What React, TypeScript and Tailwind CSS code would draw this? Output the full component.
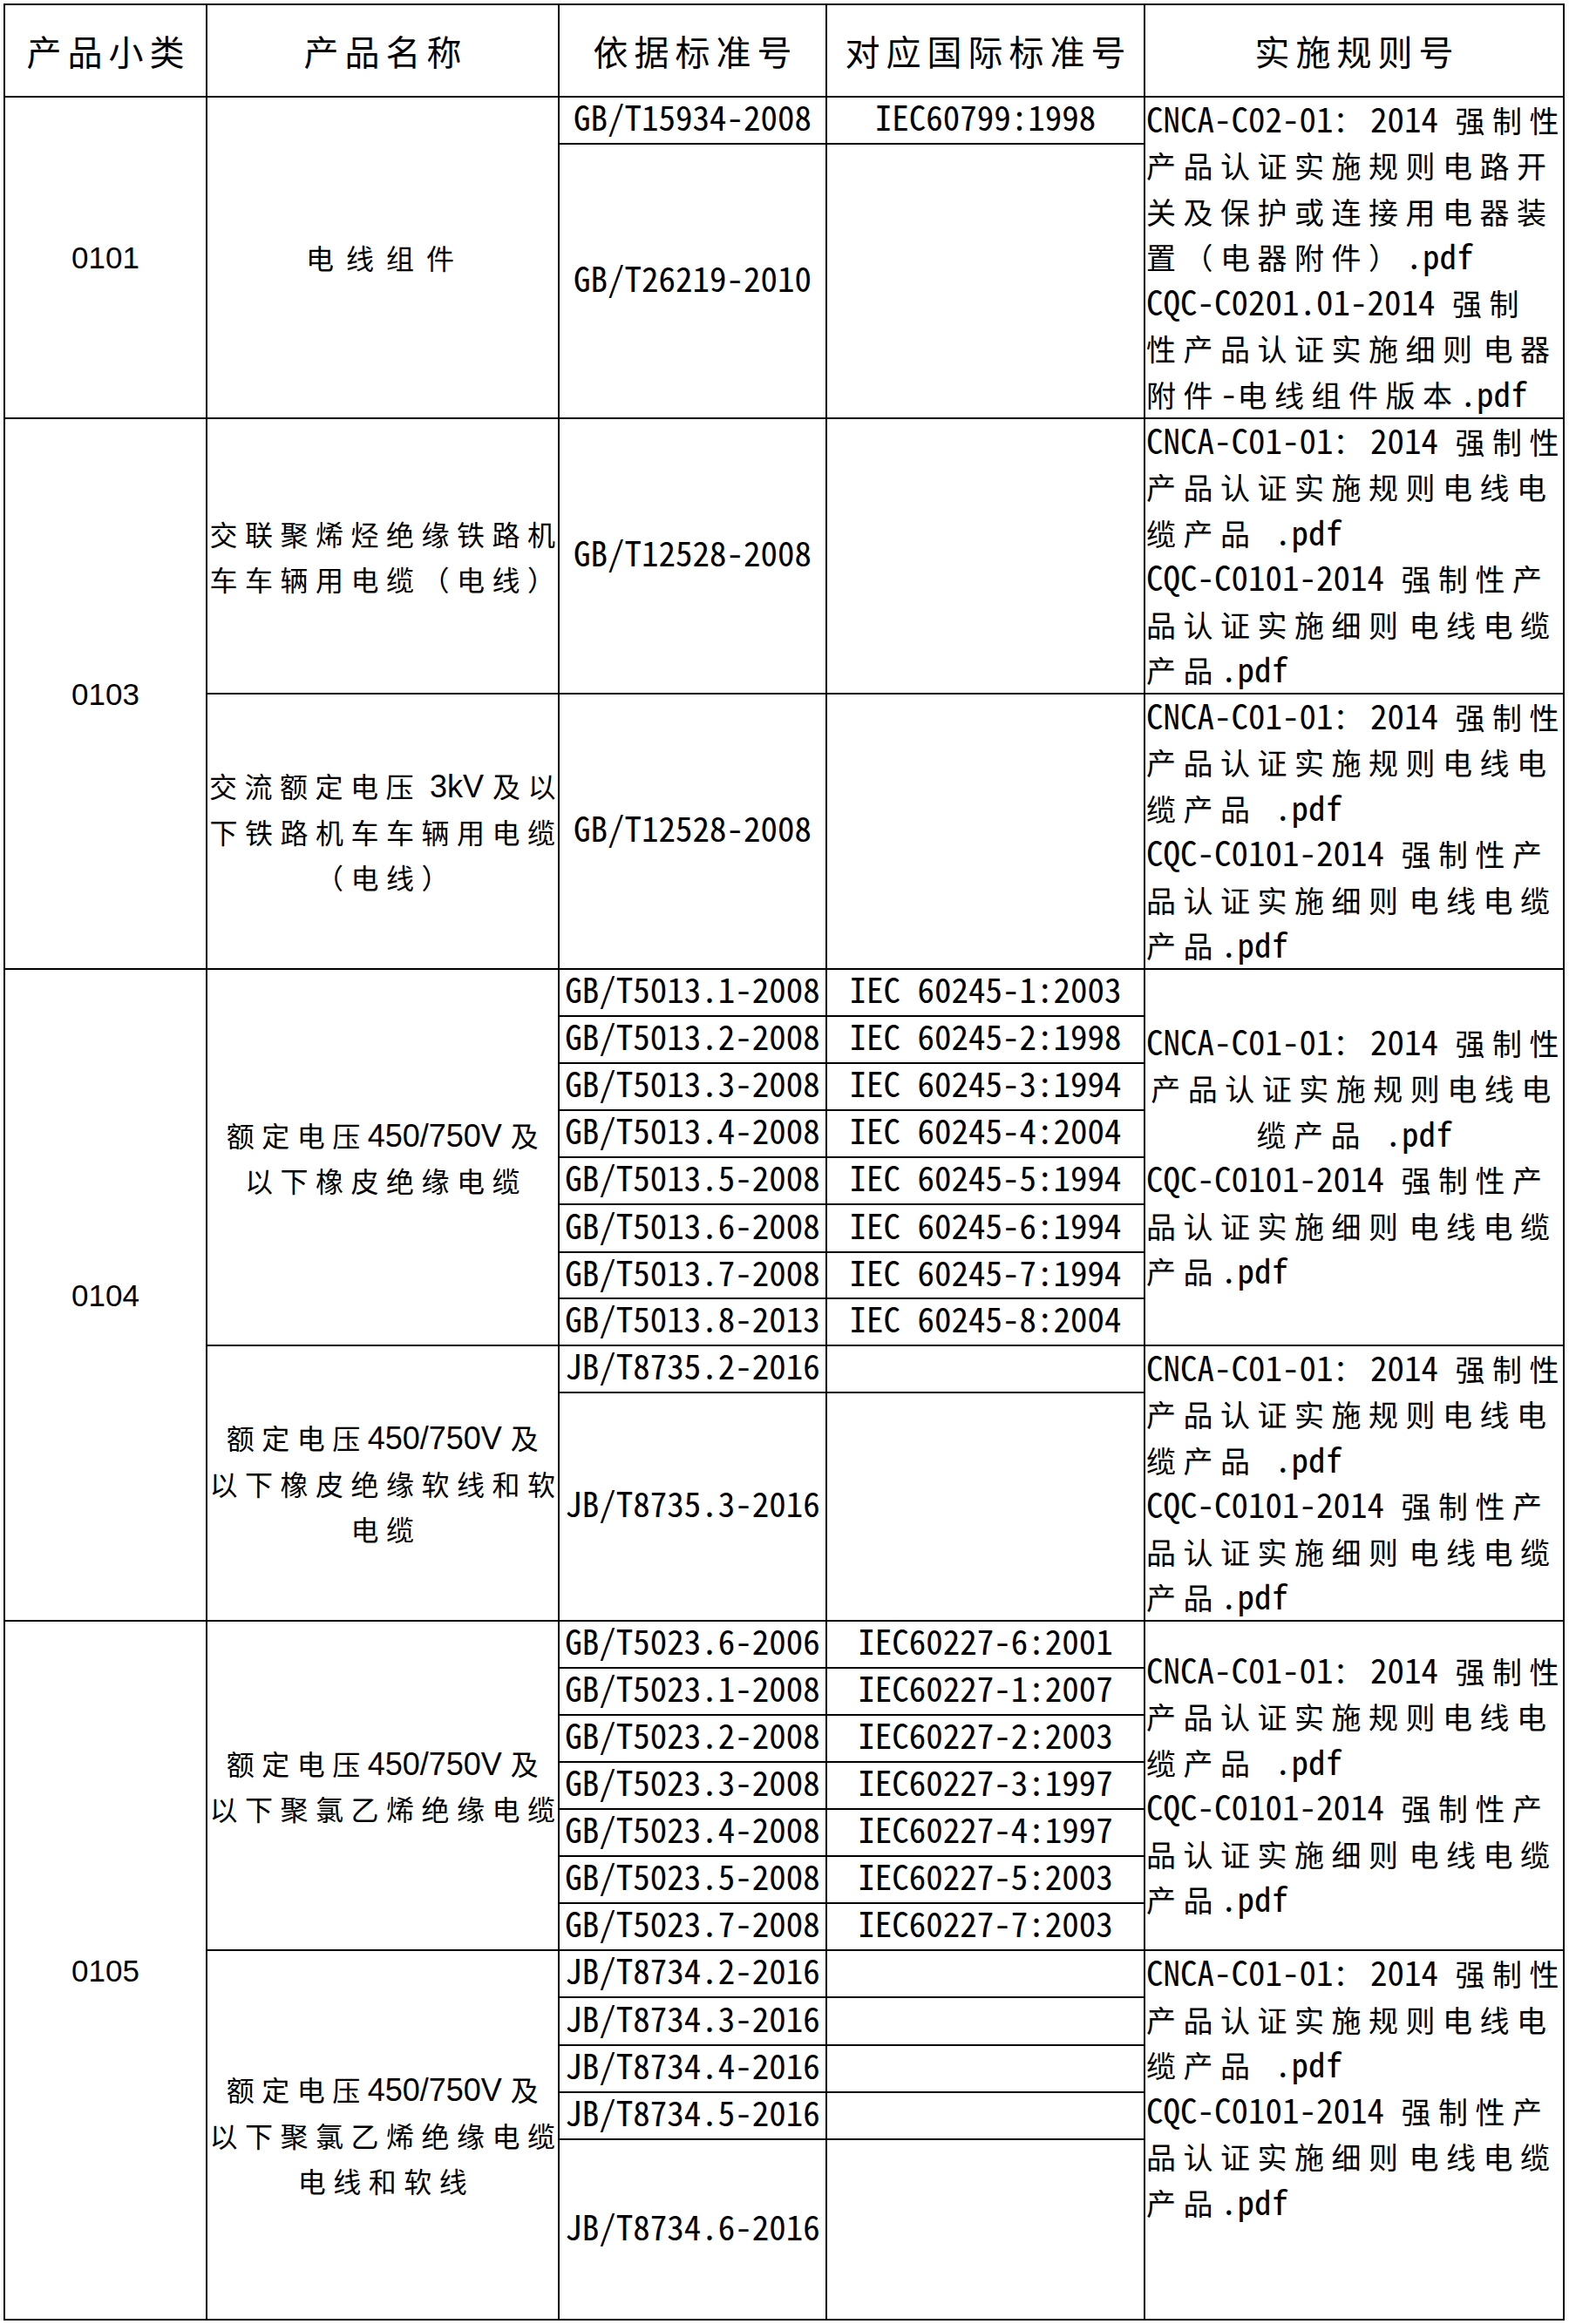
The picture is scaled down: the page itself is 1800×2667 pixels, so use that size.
import clsx from "clsx";
import type { ReactNode } from "react";

const CJK = /([\u3000-\u303f\u4e00-\u9fff\uff00-\uffef]+)/;

const MONO = "text-[39px] font-['Noto_Sans_Mono_CJK_SC','DejaVu_Sans_Mono',monospace]";
const SANS = "text-[36px] font-['Liberation_Sans',Arial,sans-serif]";
const CJK_RULE = "text-[34px] tracking-[8.5px]";
const CJK_NAME = "text-[32px] tracking-[8.5px]";

function Mixed({ text, latin = MONO, cjk = CJK_RULE }: { text: string; latin?: string; cjk?: string }) {
  const parts = text.split(CJK).filter(Boolean);
  return (
    <>
      {parts.map((p, i) => {
        if (CJK.test(p)) {
          return (
            <span key={i} className={clsx("leading-none font-['Noto_Sans_CJK_SC',sans-serif]", cjk)}>
              {p}
            </span>
          );
        }
        // a lone space between two Chinese runs is narrow in the source
        if (p.trim() === "" && i > 0 && i < parts.length - 1) {
          return (
            <span key={i} className="leading-none text-[18px]">
              {p}
            </span>
          );
        }
        return (
          <span key={i} className={clsx("leading-none", latin)}>
            {p}
          </span>
        );
      })}
    </>
  );
}

type CellProps = {
  children?: ReactNode;
  className?: string;
};

function Cell({ children, className }: CellProps) {
  return (
    <div className={clsx("border-r-2 border-b-2 border-black flex flex-col justify-center min-w-0", className)}>
      {children}
    </div>
  );
}

type LinesProps = {
  lines: string[];
  latin?: string;
  cjk?: string;
  align?: "left" | "center";
};

function Lines({ lines, latin, cjk, align = "left" }: LinesProps) {
  return (
    <>
      {lines.map((l, i) => (
        <div
          key={i}
          className={clsx(
            "h-[52.5px] leading-[52.5px] text-[32px] whitespace-pre font-['Noto_Sans_CJK_SC',sans-serif]",
            align === "center" ? "text-center" : "text-left"
          )}
        >
          <Mixed text={l} latin={latin} cjk={cjk} />
        </div>
      ))}
    </>
  );
}

function Head({ text }: { text: string }) {
  return (
    <Cell className="items-center">
      <span className="text-[40px] tracking-[7px] pl-[7px] leading-none font-['Noto_Sans_CJK_SC',sans-serif]">
        {text}
      </span>
    </Cell>
  );
}

function Code({ text, span }: { text: string; span: string }) {
  return (
    <Cell className={clsx("items-center", span)}>
      <span className="text-[35px] leading-none font-['Liberation_Sans',Arial,sans-serif]">{text}</span>
    </Cell>
  );
}

function Name({ lines, span, cjk = CJK_NAME }: { lines: string[]; span: string; cjk?: string }) {
  return (
    <Cell className={clsx("items-center", span)}>
      <div className="pl-[8px]">
        <Lines lines={lines} latin={SANS} cjk={cjk} align="center" />
      </div>
    </Cell>
  );
}

function Std({ text }: { text?: string }) {
  return (
    <Cell className="items-center">
      {text && (
        <div className="h-[52px] leading-[52px] text-[32px] whitespace-pre">
          <Mixed text={text} />
        </div>
      )}
    </Cell>
  );
}

const CNCA_C01 = ["CNCA-C01-01：2014 强制性", "产品认证实施规则电线电", "缆产品 .pdf"];
const CQC_C0101 = ["CQC-C0101-2014 强制性产", "品认证实施细则 电线电缆", "产品.pdf"];

function Rule({ span, top, centerFirst }: { span?: string; top?: boolean; centerFirst?: boolean }) {
  return (
    <Cell className={clsx("pl-[1px]", span, top ? "justify-start" : "justify-center")}>
      <Lines lines={CNCA_C01} align={centerFirst ? "center" : "left"} />
      <Lines lines={CQC_C0101} />
    </Cell>
  );
}

export default function App() {
  return (
    <div className="bg-white min-h-[2667px] p-[4px] text-black">
      <div className="grid w-[1791px] border-l-2 border-t-2 border-black grid-cols-[232px_404px_307px_365px_481px] grid-rows-[106px_54px_315px_316px_316px_54px_54px_54px_54px_54px_55px_53px_54px_54px_262px_54px_54px_54px_54px_54px_54px_54px_54px_55px_54px_54px_207px]">
        <Head text="产品小类" />
        <Head text="产品名称" />
        <Head text="依据标准号" />
        <Head text="对应国际标准号" />
        <Head text="实施规则号" />

        {/* 0101 */}
        <Code text="0101" span="row-span-2" />
        <Name lines={["电线组件"]} span="row-span-2" cjk="text-[32px] tracking-[14px]" />
        <Std text="GB/T15934-2008" />
        <Std text="IEC60799:1998" />
        <Cell className="row-span-2 pl-[1px]">
          <Lines
            lines={[
              "CNCA-C02-01：2014 强制性",
              "产品认证实施规则电路开",
              "关及保护或连接用电器装",
              "置（电器附件）.pdf",
              "CQC-C0201.01-2014 强制",
              "性产品认证实施细则 电器",
              "附件-电线组件版本.pdf",
            ]}
          />
        </Cell>
        <Std text="GB/T26219-2010" />
        <Std />

        {/* 0103 */}
        <Code text="0103" span="row-span-2" />
        <Name lines={["交联聚烯烃绝缘铁路机", "车车辆用电缆（电线）"]} span="" />
        <Std text="GB/T12528-2008" />
        <Std />
        <Rule />
        <Name lines={["交流额定电压 3kV 及以", "下铁路机车车辆用电缆", "（电线）"]} span="" />
        <Std text="GB/T12528-2008" />
        <Std />
        <Rule />

        {/* 0104 */}
        <Code text="0104" span="row-span-10" />
        <Name lines={["额定电压450/750V 及", "以下橡皮绝缘电缆"]} span="row-span-8" />
        <Std text="GB/T5013.1-2008" />
        <Std text="IEC 60245-1:2003" />
        <Rule span="row-span-8" centerFirst />
        <Std text="GB/T5013.2-2008" />
        <Std text="IEC 60245-2:1998" />
        <Std text="GB/T5013.3-2008" />
        <Std text="IEC 60245-3:1994" />
        <Std text="GB/T5013.4-2008" />
        <Std text="IEC 60245-4:2004" />
        <Std text="GB/T5013.5-2008" />
        <Std text="IEC 60245-5:1994" />
        <Std text="GB/T5013.6-2008" />
        <Std text="IEC 60245-6:1994" />
        <Std text="GB/T5013.7-2008" />
        <Std text="IEC 60245-7:1994" />
        <Std text="GB/T5013.8-2013" />
        <Std text="IEC 60245-8:2004" />
        <Name lines={["额定电压450/750V 及", "以下橡皮绝缘软线和软", "电缆"]} span="row-span-2" />
        <Std text="JB/T8735.2-2016" />
        <Std />
        <Rule span="row-span-2" />
        <Std text="JB/T8735.3-2016" />
        <Std />

        {/* 0105 */}
        <Code text="0105" span="row-span-12" />
        <Name lines={["额定电压450/750V 及", "以下聚氯乙烯绝缘电缆"]} span="row-span-7" />
        <Std text="GB/T5023.6-2006" />
        <Std text="IEC60227-6:2001" />
        <Rule span="row-span-7" />
        <Std text="GB/T5023.1-2008" />
        <Std text="IEC60227-1:2007" />
        <Std text="GB/T5023.2-2008" />
        <Std text="IEC60227-2:2003" />
        <Std text="GB/T5023.3-2008" />
        <Std text="IEC60227-3:1997" />
        <Std text="GB/T5023.4-2008" />
        <Std text="IEC60227-4:1997" />
        <Std text="GB/T5023.5-2008" />
        <Std text="IEC60227-5:2003" />
        <Std text="GB/T5023.7-2008" />
        <Std text="IEC60227-7:2003" />
        <Name lines={["额定电压450/750V 及", "以下聚氯乙烯绝缘电缆", "电线和软线"]} span="row-span-5" />
        <Std text="JB/T8734.2-2016" />
        <Std />
        <Rule span="row-span-5" top />
        <Std text="JB/T8734.3-2016" />
        <Std />
        <Std text="JB/T8734.4-2016" />
        <Std />
        <Std text="JB/T8734.5-2016" />
        <Std />
        <Std text="JB/T8734.6-2016" />
        <Std />
      </div>
    </div>
  );
}
